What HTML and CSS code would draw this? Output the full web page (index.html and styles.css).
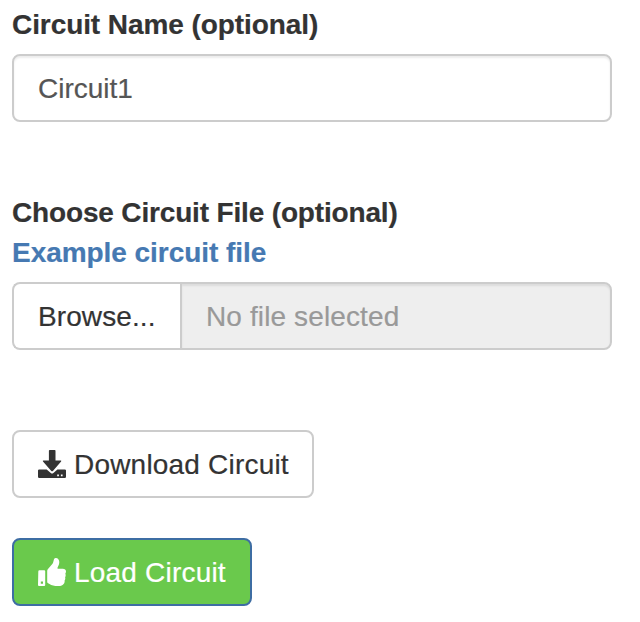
FILE: index.html
```html
<!DOCTYPE html>
<html lang="en">
<head>
<meta charset="utf-8">
<title>Circuit</title>
<link rel="stylesheet" href="styles.css">
</head>
<body>
<form class="panel">
  <div class="group">
    <label class="label"><span class="t-name">Circuit Name (optional)</span></label>
    <div class="control"><span class="t-value">Circuit1</span></div>
  </div>
  <div class="group file-group">
    <label class="label"><span class="t-choose">Choose Circuit File (optional)</span><br><a class="link">Example circuit file</a></label>
    <div class="file-row">
      <span class="browse"><span class="t-browse">Browse...</span></span>
      <div class="control readonly"><span class="t-none">No file selected</span></div>
    </div>
  </div>
  <div class="btn download">
    <svg class="icon" viewBox="0 0 28 28"><path d="M11.8 0h4.9q.8 0 .8.8v9.8h5.2q1 .1.4 1l-8.2 9.3q-.8.9-1.6 0L5 11.6q-.6-.9.4-1h5.5V.8q0-.8.9-.8Z"/><path fill-rule="evenodd" d="M1.2 19.4h7.5l4.1 3.7q1.3 1 2.6 0l4-3.7h7.4q1.2 0 1.2 1.2v6.2q0 1.2-1.2 1.2H1.2Q0 28 0 26.8v-6.2q0-1.2 1.2-1.2ZM19.2 24.5v1.7h1.7v-1.7Zm3.7 0v1.7h1.7v-1.7Z"/></svg>
    <span class="t-download">Download Circuit</span>
  </div>
  <div class="btn load">
    <svg class="icon" viewBox="0 0 28 28"><path fill-rule="evenodd" d="M1.4 12.3h4.8q1 0 1 1v13.6q0 1-1 1H1q-1 0-1-1L.3 13.4q0-1.1 1.1-1.1ZM2.8 23.5v2.2h2.2v-2.2Z"/><path d="M9.2 12.8q0-1.1 1-2.1l4.1-4.6q.8-1 1.1-2.6l.6-2.2Q16.5 0 17.9 0c2 0 3.4 1.8 3.4 4 0 2.5-1.2 4-1.8 5.7-.2.7.1 1 .8 1h4.4c2 0 3.3 1 3.3 2.7 0 1-.4 1.7-.7 2.3.6 1 .5 2.5-.2 3.5.4 1.2.2 2.4-.5 3.2.2 1.4-.1 2.5-.8 3.3-1 1.4-2.6 2.3-5.8 2.3-3.8 0-6.3-.8-8.5-2.1l-1.4-.7q-.9-.5-.9-1.5Z"/></svg>
    <span class="t-load">Load Circuit</span>
  </div>
</form>
</body>
</html>
```
FILE: styles.css
```css
* { box-sizing: border-box; }
body {
  margin: 0;
  background: #fff;
  color: #333;
  font: 28px/40px "Liberation Sans", Arial, sans-serif;
  -webkit-text-stroke: 0.2px currentColor;
}
.panel { width: 600px; margin: 5px 0 0 12px; }
.label { display: block; font-weight: bold; margin-bottom: 9px; }
.control {
  height: 68px;
  padding: 13px 24px 11px;
  border: 2px solid #ccc;
  border-radius: 8px;
  color: #555;
  box-shadow: inset 0 2px 2px rgba(0, 0, 0, 0.075);
  white-space: nowrap;
}
.file-group { margin-top: 71px; }
.link { color: #4679b2; letter-spacing: -0.05px; }
.t-name { letter-spacing: -0.08px; }
.t-choose { letter-spacing: -0.16px; }
.t-browse { letter-spacing: 0.1px; }
.t-none { letter-spacing: 0.12px; }
.t-download { letter-spacing: 0.2px; padding-top: 2px; }
.t-load { letter-spacing: 0.2px; padding-top: 2px; }
.file-row { display: flex; }
.browse {
  width: 168px;
  height: 68px;
  padding: 13px 0 11px 24px;
  border: 2px solid #ccc;
  border-right: 0;
  border-radius: 8px 0 0 8px;
}
.readonly {
  flex: 1;
  border-radius: 0 8px 8px 0;
  background: #eee;
  color: #999;
}
.btn {
  display: flex;
  align-items: center;
  height: 68px;
  padding: 0 24px;
  border: 2px solid #ccc;
  border-radius: 8px;
  white-space: nowrap;
}
.download { width: 302px; margin-top: 80px; }
.load {
  width: 240px;
  margin-top: 40px;
  color: #fff;
  background: #6ac94c;
  border-color: #3e6da3;
}
.icon { width: 28px; height: 28px; margin: 0 8px 1px 0; fill: currentColor; flex: none; }
```
